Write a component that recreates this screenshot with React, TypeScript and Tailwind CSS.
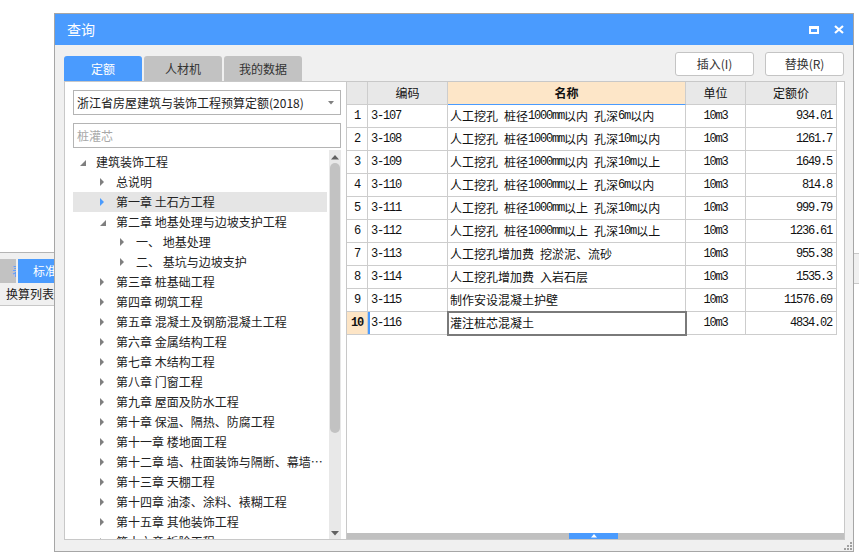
import React from 'react';

type TreeNode = { label: string; level: 0 | 1 | 2; open?: boolean; selected?: boolean };

const treeNodes: TreeNode[] = [
  { label: '建筑装饰工程', level: 0, open: true },
  { label: '总说明', level: 1 },
  { label: '第一章 土石方工程', level: 1, selected: true },
  { label: '第二章 地基处理与边坡支护工程', level: 1, open: true },
  { label: '一、 地基处理', level: 2 },
  { label: '二、 基坑与边坡支护', level: 2 },
  { label: '第三章 桩基础工程', level: 1 },
  { label: '第四章 砌筑工程', level: 1 },
  { label: '第五章 混凝土及钢筋混凝土工程', level: 1 },
  { label: '第六章 金属结构工程', level: 1 },
  { label: '第七章 木结构工程', level: 1 },
  { label: '第八章 门窗工程', level: 1 },
  { label: '第九章 屋面及防水工程', level: 1 },
  { label: '第十章 保温、隔热、防腐工程', level: 1 },
  { label: '第十一章 楼地面工程', level: 1 },
  { label: '第十二章 墙、柱面装饰与隔断、幕墙工程', level: 1 },
  { label: '第十三章 天棚工程', level: 1 },
  { label: '第十四章 油漆、涂料、裱糊工程', level: 1 },
  { label: '第十五章 其他装饰工程', level: 1 },
  { label: '第十六章 拆除工程', level: 1 },
];

const indent = ['pl-[7px]', 'pl-[27px]', 'pl-[47px]'];

const rows = [
  ['3-107', '人工挖孔 桩径1000mm以内 孔深6m以内', '10m3', '934.01'],
  ['3-108', '人工挖孔 桩径1000mm以内 孔深10m以内', '10m3', '1261.7'],
  ['3-109', '人工挖孔 桩径1000mm以内 孔深10m以上', '10m3', '1649.5'],
  ['3-110', '人工挖孔 桩径1000mm以上 孔深6m以内', '10m3', '814.8'],
  ['3-111', '人工挖孔 桩径1000mm以上 孔深10m以内', '10m3', '999.79'],
  ['3-112', '人工挖孔 桩径1000mm以上 孔深10m以上', '10m3', '1236.61'],
  ['3-113', '人工挖孔增加费 挖淤泥、流砂', '10m3', '955.38'],
  ['3-114', '人工挖孔增加费 入岩石层', '10m3', '1535.3'],
  ['3-115', '制作安设混凝土护壁', '10m3', '11576.69'],
  ['3-116', '灌注桩芯混凝土', '10m3', '4834.02'],
];

// ascii runs in a narrow mono face, the rest in the CJK face
const Txt = ({ s }: { s: string }) => (
  <>
    {s
      .split(/([\x20-\x7e]+)/)
      .filter(Boolean)
      .map((p, i) =>
        /^[\x20-\x7e]+$/.test(p) ? (
          <span key={i} className="font-['Liberation_Mono',monospace] tracking-[-1.2px] whitespace-pre">
            {p}
          </span>
        ) : (
          <span key={i}>{p}</span>
        )
      )}
  </>
);

const cell = 'border-r border-b border-[#cdcdcd] flex items-center h-full';

const TreeRow = ({ n }: { n: TreeNode }) => (
  <div className={`flex items-center h-[20px] ${indent[n.level]} ${n.selected ? 'bg-[#e5e5e5]' : ''}`}>
    <span className="w-[16px] shrink-0 flex items-center">
      {n.open ? (
        <svg width="7" height="7" className="mt-[3px]">
          <path d="M6 0V6H0Z" fill="#7f7f7f" />
        </svg>
      ) : (
        <svg width="5" height="8">
          <path d="M0 0L4 4L0 8Z" fill={n.selected ? '#4a9bfe' : '#7f7f7f'} />
        </svg>
      )}
    </span>
    <span className="min-w-0 flex-1 truncate pr-[2px] text-[12px] text-[#222]">{n.label}</span>
  </div>
);

const LeftPanel = () => (
  <div className="w-[283px] h-[459px] shrink-0 bg-white border border-[#c8c8c8] flex flex-col pl-[8px] pr-[5px] pt-[8px]">
    <div className="h-[25px] border border-[#b4b4b4] flex items-center pl-[3px] pr-[6px]">
      <span className="flex-1 text-[12px] text-[#222]">浙江省房屋建筑与装饰工程预算定额(2018)</span>
      <svg width="6" height="4">
        <path d="M0 0H6L3 3.5Z" fill="#808080" />
      </svg>
    </div>
    <div className="h-[25px] mt-[8px] border border-[#b4b4b4] flex items-center pl-[3px] text-[12px] text-[#a8a8a8]">
      桩灌芯
    </div>
    <div className="flex-1 mt-[2px] flex gap-[2px] min-h-0">
      <div className="flex-1 overflow-hidden pt-[2px]">
        {treeNodes.map((n) => (
          <TreeRow key={n.label} n={n} />
        ))}
      </div>
      <div className="w-[12px] bg-[#e8e8e8] flex flex-col items-center">
        <svg width="8" height="5" className="mt-[5px]">
          <path d="M0 4.5L4 0L8 4.5Z" fill="#606060" />
        </svg>
        <div className="w-[10px] h-[270px] mt-[3px] rounded-full bg-[#c2c2c2]" />
        <div className="flex-1" />
        <svg width="8" height="5" className="mb-[3px]">
          <path d="M0 0H8L4 4.5Z" fill="#606060" />
        </svg>
      </div>
    </div>
  </div>
);

const RightPanel = () => (
  <div className="w-[498px] h-[459px] bg-white border-t border-r border-b border-[#c8c8c8] flex flex-col text-[12px] text-[#111]">
    <div className="flex h-[23px]">
      <div className={`w-[21px] bg-[#e8e8e8] ${cell}`} />
      <div className={`w-[80px] bg-[#e8e8e8] justify-center ${cell}`}>编码</div>
      <div className={`w-[238px] bg-[#fde6c8] justify-center font-bold ${cell} border-b-[#4a9bfe]`}>名称</div>
      <div className={`w-[60px] bg-[#e8e8e8] justify-center ${cell}`}>单位</div>
      <div className={`w-[91px] bg-[#e8e8e8] justify-center ${cell}`}>定额价</div>
    </div>
    {rows.map((r, i) => {
      const last = i === rows.length - 1;
      return (
        <div key={r[0]} className="flex h-[23px]">
          <div
            className={`w-[21px] justify-center font-['Liberation_Mono',monospace] tracking-[-1.2px] ${cell} ${
              last ? 'bg-[#fde5c6] font-bold' : ''
            }`}
          >
            {i + 1}
          </div>
          <div className={`w-[80px] pl-[3px] ${cell} ${last ? 'shadow-[inset_2px_0_0_#4a9bfe]' : ''}`}>
            <Txt s={r[0]} />
          </div>
          <div
            className={`w-[238px] pl-[2px] whitespace-nowrap ${cell} ${
              last ? 'relative outline-2 outline-offset-[-1px] outline-[#7a7a7a]' : ''
            }`}
          >
            <Txt s={r[1]} />
          </div>
          <div className={`w-[60px] justify-center ${cell}`}>
            <Txt s={r[2]} />
          </div>
          <div className={`w-[91px] justify-end pr-[4px] ${cell}`}>
            <Txt s={r[3]} />
          </div>
        </div>
      );
    })}
    <div className="flex-1" />
    <div className="h-[6px] flex bg-[#c0c0c0]">
      <div className="w-[222px]" />
      <div className="w-[49px] bg-[#4a9bfe] flex items-center justify-center">
        <svg width="6" height="4">
          <path d="M0 3.5L3 0L6 3.5Z" fill="#ffffff" />
        </svg>
      </div>
    </div>
  </div>
);

const Dialog = () => (
  <div className="absolute left-[54px] top-[13px] w-[800px] h-[539px] border border-[#a6a6a6] bg-[#f0f0f0] flex flex-col font-['Noto_Sans_CJK_SC',sans-serif]">
    <div className="h-[31px] shrink-0 bg-[#4a9bfe] flex items-center pl-[12px] pr-[9px]">
      <span className="flex-1 text-[14px] text-white">查询</span>
      <svg width="10" height="8" className="mr-[15px]">
        <path d="M0 0H10V8H0Z M2 3V6H8V3Z" fill="#ffffff" fillRule="evenodd" />
      </svg>
      <svg width="10" height="9">
        <path d="M1 1L9 8M9 1L1 8" stroke="#ffffff" strokeWidth="2.2" />
      </svg>
    </div>
    <div className="h-[36px] shrink-0 flex justify-between pl-[9px] pr-[9px]">
      <div className="flex items-end gap-[2px]">
        <div className="w-[78px] h-[25px] rounded-t-[3px] bg-[#4a9bfe] text-white text-[12px] flex items-center justify-center">
          定额
        </div>
        <div className="w-[78px] h-[25px] rounded-t-[3px] bg-[#c2c2c2] text-[#333] text-[12px] flex items-center justify-center">
          人材机
        </div>
        <div className="w-[78px] h-[25px] rounded-t-[3px] bg-[#c2c2c2] text-[#333] text-[12px] flex items-center justify-center">
          我的数据
        </div>
      </div>
      <div className="flex gap-[11px] mt-[7px]">
        <button className="w-[79px] h-[24px] rounded-[3px] border border-[#c4c4c4] bg-white text-[12px] text-[#333]">
          插入(I)
        </button>
        <button className="w-[79px] h-[24px] rounded-[3px] border border-[#c4c4c4] bg-white text-[12px] text-[#333]">
          替换(R)
        </button>
      </div>
    </div>
    <div className="flex pl-[9px]">
      <LeftPanel />
      <RightPanel />
    </div>
    <div className="flex-1 flex justify-end items-end pr-[1px] pb-[1px]">
      <svg width="8" height="8">
        <path d="M6 0h2v2h-2zM6 3h2v2h-2zM3 3h2v2h-2zM6 6h2v2h-2zM3 6h2v2h-2zM0 6h2v2h-2z" fill="#a0a0a0" />
      </svg>
    </div>
  </div>
);

export default function App() {
  return (
    <div className="relative w-[859px] h-[559px] bg-white overflow-hidden font-['Noto_Sans_CJK_SC',sans-serif]">
      {/* bits of the main window behind the dialog */}
      <div className="absolute left-0 top-[252px] w-[60px] flex flex-col">
        <div className="h-[7px] border-t border-[#b4b4b4] bg-[#f0f0f0]" />
        <div className="h-[24px] flex gap-[2px] bg-[#f0f0f0]">
          <div className="w-[16px] bg-[#c2c2c2] text-[12px] text-[#4a9bfe] flex items-center justify-end overflow-hidden">
            <span className="-mr-[8px]">表</span>
          </div>
          <div className="flex-1 bg-[#4a9bfe] text-white text-[12px] flex items-center pl-[15px] whitespace-nowrap">
            标准
          </div>
        </div>
        <div className="h-[23px] bg-[#f0f0f0] border-b border-[#c8c8c8] text-[12px] text-[#222] flex items-center pl-[6px] whitespace-nowrap">
          换算列表
        </div>
      </div>
      <div className="absolute left-[853px] top-[253px] w-[6px] h-[31px] bg-[#f0f0f0] border-t border-b border-[#c8c8c8]" />
      <Dialog />
    </div>
  );
}
